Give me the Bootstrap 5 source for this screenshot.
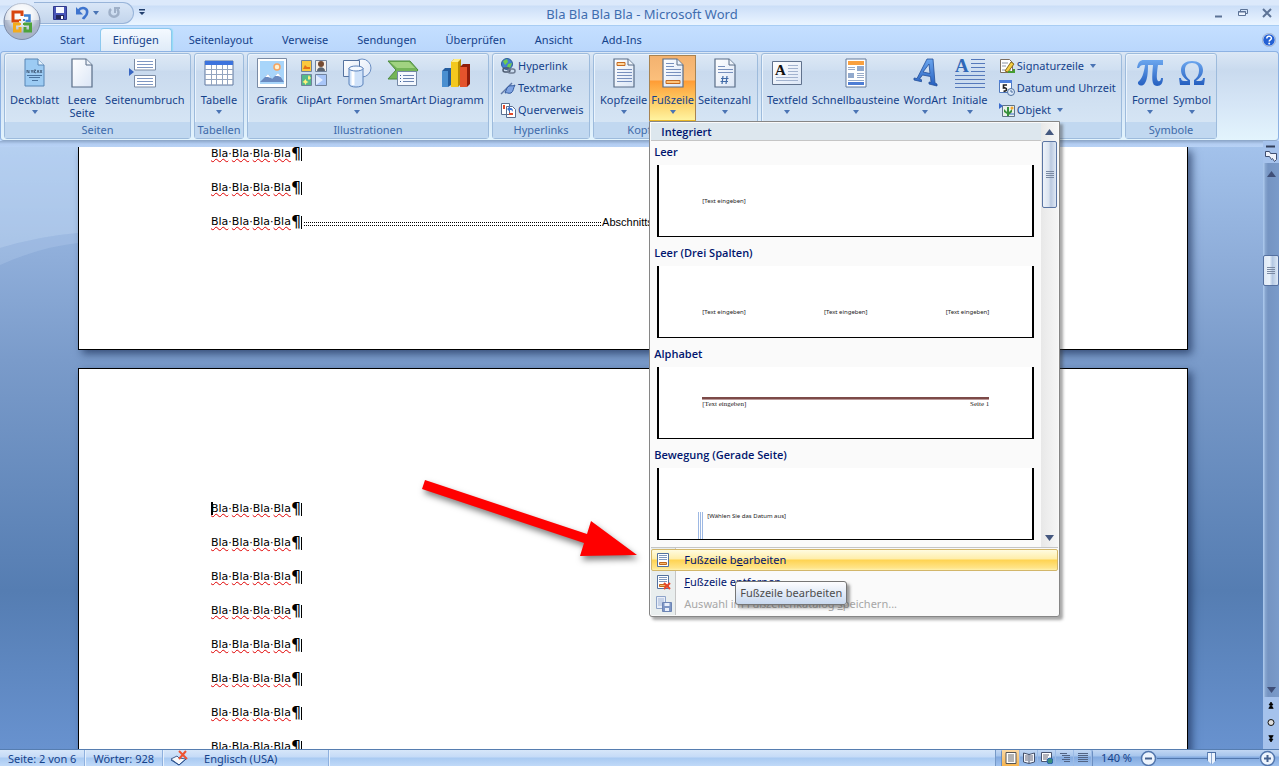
<!DOCTYPE html>
<html lang="de">
<head>
<meta charset="utf-8">
<meta name="viewport" content="width=device-width, initial-scale=1">
<title>Bla Bla Bla Bla - Microsoft Word</title>
<link href="https://cdn.jsdelivr.net/npm/bootstrap@5.3.0/dist/css/bootstrap.min.css" rel="stylesheet">
<style>
  :root { --ink: #15428b; --line: #9dbbdc; }
  body { font: 11px/14px "Noto Sans", sans-serif; color: var(--ink); background: #bfdbff; height: 100vh; }
  button { font: inherit; color: inherit; background: none; border: 0; padding: 0; }
  a { color: inherit; text-decoration: none; }
  svg { display: block; flex: none; }

  /* title bar */
  .titlebar { height: 26px; background: linear-gradient(#dce9fb 0 5px, #cbdef7 6px, #dceafc 16px, #e9f4ff 24px); border-bottom: 1px solid #a8cdf3; }
  .quickbar { margin-left: 34px; width: 100px; height: 22px; margin-top: 2px; padding-left: 19px; border: 1px solid #98b4d9; border-radius: 0 11px 11px 0; border-left: 0; background: linear-gradient(#d9e6f7, #c3d5ec); }
  .caption { font-size: 13px; line-height: 28px; color: #3f6daf; padding-right: 74px; white-space: nowrap; }
  .orb { left: 3px; top: 2px; z-index: 5; }
  .wincontrols { gap: 12px; padding-right: 6px; }

  /* tabs */
  .tabstrip { height: 25px; padding: 2px 3px 0 46px; gap: 1px; background: linear-gradient(#c4dfff, #bad7fc); }
  .tab { height: 23px; line-height: 22px; padding: 1px 14px; }
  .tab.active { background: linear-gradient(#f4f9ff, #dfebf8); border: 1px solid #8cc8ee; border-bottom: 0; border-radius: 4px 4px 0 0; padding: 0 12px; margin-right: 2px; box-shadow: 1px 0 1px #8fdcf5; }

  /* ribbon */
  .ribbon { height: 90px; padding: 1px 2px 1px 3px; gap: 3px; border: 1px solid #8db2e3; border-bottom-color: #8fa9cb; border-radius: 4px; background: linear-gradient(#dbe7f5, #c9daee 18px, #d5e5f6 50px, #e3f4fd); }
  .rgroup { border: 1px solid var(--line); border-radius: 3px; box-shadow: inset 1px 1px #eaf3fc; background: linear-gradient(#dde8f5, #cfdff1 16px, #c9daee 17px, #d9e8f6); height: 86px; flex: none; }
  .rgroup > .rbody { height: 68px; padding: 1px 3px 0; }
  .rgroup.g5 > .rbody { padding-left: 4px; }
  .rname { height: 16px; line-height: 16px; background: #c1d8f0; color: #3e6aaa; text-align: center; white-space: nowrap; overflow: hidden; }
  .big { display: flex; flex-direction: column; align-items: center; min-width: 42px; height: 66px; padding: 2px; white-space: nowrap; line-height: 13px; }
  .big > svg { margin-bottom: 4px; }
  .big .chev { margin: 4px 0 0; }
  .big.on { background: linear-gradient(#f3b26f, #fbbf7b 24px, #ff9c35 25px, #fdd36d 48px, #fff3a0); border: 1px solid #a88350; border-bottom-color: #e9b827; padding: 1px; }
  .mini { display: flex; align-items: center; gap: 2px; height: 22px; white-space: nowrap; }
  .g1 { width: 187px; } .g2 { width: 50px; } .g3 { width: 242px; } .g4 { width: 98px; }
  .g5 { width: 165px; } .g6 { width: 361px; } .g7 { width: 92px; }

  /* gallery menu */
  .gallery { left: 0; top: 100%; width: 411px; z-index: 10; background: #fafafa; border: 1px solid #868686; border-radius: 0 0 3px 3px; box-shadow: 3px 3px 3px rgba(60,60,60,.45); color: #00156e; padding: 1px; }
  .ghead { background: #dde7ee; height: 18px; padding-left: 10px; border-bottom: 1px solid #c5c5c5; font: 600 11px/18px "Open Sans", sans-serif; }
  .gtitle { display: block; font: 600 11px/14px "Open Sans", sans-serif; padding: 4px 0 0 3px; height: 24px; }
  .preview { height: 72px; margin: 0 7px 5px 6px; background: #fff; border: solid #000; border-width: 0 2px 1px; padding: 0 43px; font-size: 6px; line-height: 8px; color: #222; }
  .preview.three { padding-bottom: 21px; }
  .preview.dated { padding-left: 39px; }
  .preview.serif { font: 7px/8px "Liberation Serif", serif; }
  .ruleline { border: solid #7c4a48; border-width: 2px 0 1px; border-bottom-color: #b99; }
  .glist { padding-bottom: 2px; }
  .gscroll { width: 17px; background: linear-gradient(90deg, #e8e8e8, #f6f6f6); }
  .garrow { width: 15px; height: 18px; display: grid; place-items: center; }
  .gthumb { width: 15px; height: 67px; border: 1px solid #5b75a3; border-radius: 2px; background: linear-gradient(90deg, #eef3fa, #dbe4f0 45%, #b9c8e0 60%, #dfe8f4); place-items: center; }
  .gitem { display: flex; align-items: center; height: 22px; width: 100%; padding-left: 4px; gap: 12px; border: 1px solid transparent; text-align: left; }
  .gitem.hot { border-color: #d2b66a; border-radius: 2px; background: linear-gradient(#fffbe0, #ffeea9 9px, #ffd351 10px, #ffe58b 18px, #fff2b0); }
  .gitem:disabled { color: #a7a7a7; }
  .gfoot { border-top: 1px solid #c5c5c5; padding-top: 1px; background: linear-gradient(90deg, #e9eeee 24px, #c5c5c5 24px 25px, #fafafa 25px); }
  .hint { left: 85px; bottom: 11px; height: 24px; line-height: 22px; padding: 0 4px; border: 1px solid #767676; border-radius: 3px; background: linear-gradient(#fdfdff, #c9d9ef); color: #4c4c4c; box-shadow: 3px 3px 3px rgba(60,60,60,.5); white-space: nowrap; }

  /* document */
  .work { background: linear-gradient(#a4c3ec, #8eadd9 120px, #7a9bca 220px, #557db2 450px, #6892cf); }
  .glow { left: 0; top: 0; }
  .topline { height: 6px; background: linear-gradient(#93add0, #b3cdf2 3px, #b8d2f5); }
  .canvas { min-height: 0; padding: 0 75px 0 78px; gap: 18px; z-index: 1; }
  .sheet { border: 1px solid #000; background: #fff; box-shadow: 4px 4px 8px rgba(20,40,80,.65); padding-left: 132px; color: #000; flex: none; font: 11px/34px "DejaVu Sans", sans-serif; overflow: hidden; }
  .sheet.first { border-top: 0; height: 203px; }
  .sheet.first > p:first-child { margin-top: -10px; }
  .sheet.second { padding-top: 123px; height: 420px; }
  .sheet p { margin: 0; height: 34px; display: flex; align-items: center; white-space: nowrap; }
  .sheet u { text-decoration: underline wavy #e00000 1px; text-underline-offset: 1px; }
  .pil { font-size: 16px; line-height: 20px; }
  .cursor { width: 2px; height: 13px; background: #000; margin-right: -2px; }
  .pil::after { content: ""; display: inline-block; width: 1px; height: 13px; background: #000; vertical-align: -2px; }
  .dots { width: 298px; height: 4px; margin: 4px 0 0 2px; background: linear-gradient(#fff, #fff) 0 1px / 100% 2px no-repeat, repeating-linear-gradient(90deg, #000 0 1px, #fff 1px 2px); }
  .breaktext { font-family: "Liberation Sans", sans-serif; }
  .pointer { left: 415px; top: 334px; z-index: 2; filter: drop-shadow(2px 4px 3px rgba(0,0,0,.5)); }
  .vscroll { width: 16px; background: #a5c2ec; }
  .vtrack { background: linear-gradient(90deg, #a8c5ea 0 1px, #8aa8d1 2px, #7594c2 5px, #7a9bca); }
  .vthumb { height: 31px; border: 1px solid #5470a0; border-radius: 2px; margin-top: 78px; background: linear-gradient(90deg, #dfe9f5, #e8f1fb 40%, #b4c8e3 60%, #dce8f6); place-items: center; }

  /* status bar */
  .status { height: 18px; border-top: 1px solid #567db0; background: linear-gradient(#d7e6f9, #c5dbf7 7px, #a9caf2 8px, #c0d9f8); line-height: 18px; overflow: hidden; }
  .status > .cell { padding: 0 8px; border-right: 1px solid #8eb0de; box-shadow: 1px 0 #e5f0fd; height: 18px; }
  .status > .lang { width: 166px; gap: 15px; }
  .zoomside { background: linear-gradient(#c2d7f3, #a7c5ec 6px, #83aadf 7px, #9fc1ee); border-left: 1px solid #7699c7; padding: 0 3px 0 5px; }
  .views { border: 1px solid #6b8fc2; border-radius: 3px 3px 0 0; }
  .views button { width: 18px; height: 17px; display: grid; place-items: center; border-right: 1px solid #9cbbe6; }
  .views button.on { background: linear-gradient(#fbd9a4, #f5b24b); }
  .zoomer { appearance: none; width: 102px; height: 14px; background: linear-gradient(#5278ae, #5278ae) center / 100% 1px no-repeat; }
  .zoomer::-webkit-slider-thumb { appearance: none; width: 9px; height: 13px; background: linear-gradient(90deg, #4b6fa5 0 1px, #edf4fd 1px 4px, #8aa6cf 4px 5px, #edf4fd 5px 8px, #4b6fa5 8px); clip-path: polygon(0 0, 100% 0, 100% 68%, 50% 100%, 0 68%); border-top: 1px solid #4b6fa5; }
</style>
</head>
<body class="d-flex flex-column overflow-hidden m-0 position-relative">

<svg width="0" height="0" class="position-absolute" aria-hidden="true">
  <defs>
    <linearGradient id="blue" x2="0" y2="1"><stop stop-color="#6ba6ee"/><stop offset="1" stop-color="#255fc0"/></linearGradient>
    <linearGradient id="paper" x2="1" y2="1"><stop stop-color="#fff"/><stop offset="1" stop-color="#dbe6f6"/></linearGradient>
    <radialGradient id="orbfill" cx=".5" cy=".3"><stop stop-color="#fff"/><stop offset=".6" stop-color="#e3e8f0"/><stop offset="1" stop-color="#a9b4c8"/></radialGradient>
    <symbol id="chev" viewBox="0 0 6 4"><path d="M0 0h6L3 4z" fill="#4a74b4"/></symbol>
    <symbol id="page" viewBox="0 0 24 30"><path d="M2 1h14l6 6v22H2z" fill="url(#paper)" stroke="#596d87" stroke-width="1.2"/><path d="M16 1v6h6" fill="#eef3fa" stroke="#596d87"/></symbol>
    <symbol id="doc" viewBox="0 0 14 16"><path d="M1.500 1.500h11v13h-11z" fill="#fff" stroke="#52719e"/><path d="M3 3.500h8M3 5.500h8M3 7.500h8" stroke="#7d96bd"/><path d="M3.500 10.500h7v2h-7z" fill="#f7b96a" stroke="#c2671b"/></symbol>
  </defs>
</svg>

<button class="orb position-absolute" aria-label="Office">
  <svg width="38" height="38" viewBox="0 0 38 38"><circle cx="19" cy="19.500" r="18" fill="url(#orbfill)" stroke="#7c8ba8"/><path d="M2 18a17 17 0 0 1 34 0z" fill="#fff" opacity=".55"/>
  <g fill="none" stroke-width="3"><path d="M16 19h-6V10h9v4" stroke="#d8450f"/><path d="M21 13.500h5.500V19h-4" stroke="#3c7fd0" stroke-width="2.500"/><path d="M17 22h-5.500v7H17v-4" stroke="#f3ab1c"/><path d="M21 22h6.500v7H22v-4" stroke="#4ea33b"/></g>
  <g fill="#e66a1c"><path d="M16 17h2v2h-2z"/><path d="M20 17h2v2h-2z" fill="#3c7fd0"/><path d="M16 21h2v2h-2z" fill="#f3ab1c"/><path d="M20 21h2v2h-2z" fill="#4ea33b"/></g></svg>
</button>

<header class="titlebar d-flex flex-none">
  <div class="quickbar d-flex align-items-center">
    <button aria-label="Speichern"><svg width="14" height="14" viewBox="0 0 14 14"><path d="M.5.5h13v13H.5z" fill="#4855b8" stroke="#30398c"/><path d="M3 1h8v6H3z" fill="#f5f8ff"/><path d="M3 9h8v4H3z" fill="#23275c"/><path d="M8 10h2v3H8z" fill="#fff"/></svg></button>
    <button class="ms-2" aria-label="Rückgängig"><svg width="14" height="14" viewBox="0 0 14 14"><path d="M3 5c4-5 10-3 9 2 0 3-3 4-4 6" fill="none" stroke="#3e74ce" stroke-width="2.600"/><path d="M1 1v7.500h7z" fill="#3e74ce"/></svg></button>
    <svg class="ms-1" width="6" height="4"><use href="#chev"/></svg>
    <svg class="ms-2" width="14" height="14" viewBox="0 0 14 14"><path d="M4 3a4.500 4.500 0 1 0 6 0" fill="none" stroke="#9fb0c8" stroke-width="2.500"/><path d="M7 1h6v2H9v4H7z" fill="#9fb0c8"/></svg>
  </div>
  <svg class="ms-1 mt-2" width="8" height="10" viewBox="0 0 8 10"><path d="M1 1h6v1.500H1zM1 4h6L4 7z" fill="#23406e"/></svg>
  <div class="caption flex-grow-1 text-center">Bla Bla Bla Bla - Microsoft Word</div>
  <div class="wincontrols d-flex align-items-center">
    <button aria-label="Minimieren"><svg width="13" height="10" viewBox="0 0 13 10"><path d="M3 8.500h7" stroke="#5c7396" stroke-width="2"/></svg></button>
    <button aria-label="Wiederherstellen"><svg width="12" height="10" viewBox="0 0 12 10"><path d="M3.500 3V1.500h7v4H9" fill="none" stroke="#5c7396"/><path d="M1.500 3.500h7v4h-7z" fill="#eef5ff" stroke="#5c7396"/><path d="M1 4h8" stroke="#5c7396"/></svg></button>
    <button aria-label="Schließen"><svg width="12" height="10" viewBox="0 0 12 10"><path d="M2 1l8 8M10 1l-8 8" stroke="#5c7396" stroke-width="2"/></svg></button>
  </div>
</header>

<nav class="tabstrip d-flex flex-none">
  <a class="tab" href="#">Start</a><a class="tab active" href="#">Einfügen</a><a class="tab" href="#">Seitenlayout</a><a class="tab" href="#">Verweise</a><a class="tab" href="#">Sendungen</a><a class="tab" href="#">Überprüfen</a><a class="tab" href="#">Ansicht</a><a class="tab" href="#">Add-Ins</a>
  <button class="ms-auto" aria-label="Hilfe"><svg width="14" height="14" viewBox="0 0 14 14"><circle cx="7" cy="7" r="6.300" fill="#2360d4" stroke="#f2f7ff"/><circle cx="7" cy="7" r="6.700" fill="none" stroke="#8197b9" stroke-width=".6"/><path d="M4.800 5.500c0-3 4.600-2.800 4.600-.3C9.400 7 7.200 6.800 7.200 8.500" fill="none" stroke="#fff" stroke-width="1.500"/><circle cx="7.200" cy="10.500" r="1" fill="#fff"/></svg></button>
</nav>

<div class="ribbon d-flex flex-none">
  <section class="rgroup g1">
    <div class="rbody d-flex">
      <button class="big"><svg width="32" height="32" viewBox="0 0 32 32"><path d="M6 2h13l6 6v21H6z" fill="#9ccbf3" stroke="#5986b5"/><path d="M19 2v6h6" fill="#e5f2fd" stroke="#5986b5"/><path d="M8 16v-3l2 3v-3M12 13l1 1.500 1-1.500M13 14v2M15 16v-3h2l-2 2 2 1M18 16l1-3 1 3M21 13l2 3M23 13l-2 3" fill="none" stroke="#3a526e" stroke-width=".8"/><path d="M8 18.500h15M10 20.500h11M13 23.500h6" stroke="#4a739f"/></svg>Deckblatt<svg class="chev" width="6" height="4"><use href="#chev"/></svg></button>
      <button class="big"><svg width="32" height="32" viewBox="0 0 32 32"><use href="#page" x="4" y="1" width="24" height="30"/></svg>Leere<br>Seite</button>
      <button class="big"><svg width="32" height="32" viewBox="3 0 32 32"><path d="M8.500 2v11h21V2M8.500 30V18.500h21V30z" fill="#fff" stroke="#7a8ba5"/><path d="M11 4.500h16M11 7.500h16M11 10.500h16M11 21.500h16M11 24.500h16M11 27.500h16" stroke="#7f97c2"/><path d="M3 11l5 4-5 4z" fill="#3967c2"/></svg>Seitenumbruch</button>
    </div><div class="rname">Seiten</div>
  </section>
  <section class="rgroup g2">
    <div class="rbody d-flex">
      <button class="big"><svg width="32" height="32" viewBox="0 0 32 32"><path d="M2 4h28v24H2z" fill="#fff" stroke="#60789f"/><path d="M2 4h28v4H2z" fill="#3c73dd"/><path d="M2 12.500h28M2 17.500h28M2 22.500h28M8.500 8v20M13.500 8v20M19.500 8v20M24.500 8v20" stroke="#93a5c0"/></svg>Tabelle<svg class="chev" width="6" height="4"><use href="#chev"/></svg></button>
    </div><div class="rname">Tabellen</div>
  </section>
  <section class="rgroup g3">
    <div class="rbody d-flex">
      <button class="big"><svg width="32" height="32" viewBox="0 0 32 32"><path d="M1.500 1.500h29v29h-29z" fill="#fff" stroke="#7a8ba5"/><path d="M4 4h24v23H4z" fill="#a8d5fa"/><circle cx="21" cy="10" r="3" fill="#fff1d0" stroke="#f7a460" stroke-width="1.500"/><path d="M4 25l8-8 4 5 6-6 6 9z" fill="#6a8ac0"/><path d="M9 20l3-3 3 4-3-1zM19 19l3-3 3 4-3-1z" fill="#fff"/></svg>Grafik</button>
      <button class="big"><svg width="32" height="32" viewBox="0 0 32 32" stroke="#70829c"><path d="M3.500 3.500h10v11h-10z" fill="#fbc93e"/><path d="M5 12l2-4 2 2h3v2z" fill="#e47116" stroke="none"/><path d="M17.500 3.500h11v11h-11z" fill="#f6efe8"/><circle cx="23" cy="7" r="3" fill="#754a31" stroke="none"/><path d="M19 14c0-5 8-5 8 0z" fill="#5b6572" stroke="none"/><path d="M3.500 17.500h10v11h-10z" fill="#55b98a"/><path d="M6 24l1.500-2 1 2 2 1-2 1-1 2-1-2-2-1zM10 20l1-2 1 2 1 1-1 1-1 1-1-1z" fill="#fff37a" stroke="none"/><path d="M17.500 17.500h11v11h-11z" fill="#a9c6f8"/><path d="M18 18l7 5-7 5z" fill="#e3edff" stroke="none"/></svg>ClipArt</button>
      <button class="big"><svg width="32" height="32" viewBox="0 0 32 32"><circle cx="21" cy="11" r="9" fill="url(#paper)" stroke="#6c8fc3"/><path d="M2.500 3.500h16v16h-16z" fill="url(#paper)" stroke="#54729f"/><path d="M8 11v16c0 4 14 4 14 0V11z" fill="#cfe2fa" stroke="#5b82bb"/><path d="M12 13v15" stroke="#fff" stroke-width="3"/><ellipse cx="15" cy="11.500" rx="7" ry="2.500" fill="#f4f9ff" stroke="#5b82bb"/></svg>Formen<svg class="chev" width="6" height="4"><use href="#chev"/></svg></button>
      <button class="big"><svg width="32" height="32" viewBox="0 0 32 32"><path d="M1 4h22l8 9-8 9H1l8-9z" fill="#74b558" stroke="#4c8a3e"/><path d="M3 5h19l6 6H10z" fill="#a1d381"/><path d="M10.500 14.500h19v14h-19z" fill="#f4f8fe" stroke="#7489a6"/><path d="M16 18.500h11M16 21.500h11M16 24.500h11" stroke="#6b84b0"/><path d="M13 18.500h1M13 21.500h1M13 24.500h1" stroke="#355c9b"/></svg>SmartArt</button>
      <button class="big"><svg width="32" height="32" viewBox="0 0 32 32"><path d="M2 14l3-3h6v17l-3 2H2z" fill="#245c9e"/><path d="M2 14h6v16H2z" fill="#4a8fd0"/><path d="M11 5l3-3h7v25l-3 3h-7z" fill="#b98b00"/><path d="M11 5h7v25h-7z" fill="#f3c81e"/><path d="M20 10l3-3h7v20l-3 3h-7z" fill="#8f1c0a"/><path d="M20 10h7v20h-7z" fill="#e4532c"/><path d="M11 5l3-3h7l-3 3z" fill="#ffec80"/></svg>Diagramm</button>
    </div><div class="rname">Illustrationen</div>
  </section>
  <section class="rgroup g4">
    <div class="rbody">
      <button class="mini ps-1"><svg width="16" height="16" viewBox="0 0 16 16"><circle cx="7" cy="6" r="5.500" fill="#4381d1" stroke="#2e5d97"/><path d="M3 3l4-2 1 3-3 3zM8 6l4-1-2 5-3-1z" fill="#6fcd4d"/><rect x="3" y="10" width="7" height="4" rx="2" fill="none" stroke="#4b5a70" stroke-width="1.500"/><rect x="8" y="11" width="7" height="4" rx="2" fill="none" stroke="#6d7c92" stroke-width="1.500"/></svg>Hyperlink</button>
      <button class="mini ps-1"><svg width="16" height="16" viewBox="0 0 16 16"><path d="M1 14L12 3" stroke="#6179a8" stroke-width="1.500"/><path d="M7 8c3-4 5-1 8-3-2 3-1 6-4 8-3 1-4-1-6 0z" fill="#7fa3e2" stroke="#345b9e"/></svg>Textmarke</button>
      <button class="mini ps-1"><svg width="16" height="16" viewBox="0 0 16 16"><path d="M1.500 1.500h8v11h-8zM6.500 4.500h6l3 3v8h-9z" fill="#fff" stroke="#5a6f90"/><path d="M3 3h2v4H3zM9 11h4v2H9z" fill="#e34a2b"/><path d="M7 7l3-3v2c3 0 3 2 3 4-1-2-2-2-3-2v2z" fill="#3c73cf"/></svg>Querverweis</button>
    </div><div class="rname">Hyperlinks</div>
  </section>
  <section class="rgroup g5">
    <div class="rbody d-flex">
      <button class="big"><svg width="32" height="32" viewBox="0 0 32 32"><use href="#page" x="4" y="1" width="24" height="30"/><path d="M9 5.500h8v3H9z" fill="#ffd59a" stroke="#c56a21"/><path d="M9 12.500h15M9 15.500h15M9 18.500h15M9 21.500h15M9 24.500h15" stroke="#7890bd"/></svg>Kopfzeile<svg class="chev" width="6" height="4"><use href="#chev"/></svg></button>
      <div class="position-relative align-self-start">
        <button class="big on" aria-expanded="true"><svg width="32" height="32" viewBox="0 0 32 32"><use href="#page" x="4" y="1" width="24" height="30"/><path d="M9 6.500h8M9 9.500h8M9 12.500h15M9 15.500h15M9 18.500h15" stroke="#7890bd"/><path d="M9 23.500h14v3H9z" fill="#ffc47a" stroke="#c56a21"/></svg>Fußzeile<svg class="chev" width="6" height="4"><use href="#chev"/></svg></button>
        <div class="gallery position-absolute">
          <div class="d-flex">
            <div class="glist flex-grow-1">
              <div class="ghead">Integriert</div>
              <a href="#" class="d-block"><span class="gtitle">Leer</span><div class="preview d-flex align-items-center">[Text eingeben]</div></a>
              <a href="#" class="d-block"><span class="gtitle">Leer (Drei Spalten)</span><div class="preview three d-flex align-items-end justify-content-between"><span>[Text eingeben]</span><span>[Text eingeben]</span><span>[Text eingeben]</span></div></a>
              <a href="#" class="d-block"><span class="gtitle">Alphabet</span><div class="preview serif d-flex flex-column justify-content-center"><div class="ruleline"></div><div class="d-flex justify-content-between"><span>[Text eingeben]</span><span>Seite 1</span></div></div></a>
              <a href="#" class="d-block"><span class="gtitle">Bewegung (Gerade Seite)</span><div class="preview dated d-flex align-items-end"><div class="d-flex gap-1"><svg width="5" height="27"><path d="M.5 0v27M2.500 0v27M4.500 0v27" stroke="#9db8e3"/></svg><span>[Wählen Sie das Datum aus]</span></div></div></a>
            </div>
            <div class="gscroll d-flex flex-column align-items-center">
              <button aria-label="Nach oben" class="garrow"><svg width="9" height="6"><path d="M0 6h9L4.500 0z" fill="#45587f"/></svg></button>
              <div class="gthumb d-grid"><svg width="8" height="8"><path d="M0 .5h8M0 2.500h8M0 4.500h8M0 6.500h8" stroke="#7b8aa3"/></svg></div>
              <button aria-label="Nach unten" class="garrow mt-auto"><svg width="9" height="6"><path d="M0 0h9L4.500 6z" fill="#45587f"/></svg></button>
            </div>
          </div>
          <div class="gfoot">
            <button class="gitem hot"><svg width="16" height="16"><use href="#doc" width="14" height="16"/></svg><span>Fußzeile b<u>e</u>arbeiten</span></button>
            <button class="gitem"><svg width="16" height="16"><use href="#doc" width="14" height="16"/><path d="M8 9l6 6M14 9l-6 6" stroke="#e8472a" stroke-width="2"/></svg><span><u>F</u>ußzeile entfernen</span></button>
            <button class="gitem" disabled><svg width="16" height="16" viewBox="0 0 16 16"><path d="M.5.5h9v12h-9z" fill="#e8eef8" stroke="#8ea4c9"/><path d="M2 3h6M2 5h6M2 7h4M2 9h4" stroke="#a3b6d6"/><path d="M6.500 6.500h9v9h-9z" fill="#7e96c4" stroke="#6c84b4"/><path d="M8.500 7h5v3h-5zM9 12h4v3H9z" fill="#e9effa"/></svg><span>Auswahl im Fußzeilenkatalog <u>s</u>peichern...</span></button>
          </div>
          <div class="hint position-absolute" role="tooltip">Fußzeile bearbeiten</div>
        </div>
      </div>
      <button class="big"><svg width="32" height="32" viewBox="0 0 32 32"><use href="#page" x="4" y="1" width="24" height="30"/><path d="M9 9.500h7M9 12.500h15M9 15.500h15" stroke="#7890bd"/><path d="M14 19l-1 8M18 19l-1 8M12 21.500h7.500M11.500 24.500H19" stroke="#426ba7" stroke-width="1.200"/></svg>Seitenzahl<svg class="chev" width="6" height="4"><use href="#chev"/></svg></button>
    </div><div class="rname">Kopf- und Fußzeile</div>
  </section>
  <section class="rgroup g6">
    <div class="rbody d-flex">
      <button class="big"><svg width="32" height="32" viewBox="0 0 32 32"><path d="M1.500 4.500h29v23h-29z" fill="url(#paper)" stroke="#60728d"/><path d="M17 8.500h10M17 11.500h10M17 14.500h10M17 17.500h10M5 20.500h22M5 23.500h22" stroke="#a2b3cf"/><text x="4" y="18" font-family="Liberation Serif, serif" font-size="15" font-weight="bold" fill="#111">A</text></svg>Textfeld<svg class="chev" width="6" height="4"><use href="#chev"/></svg></button>
      <button class="big"><svg width="32" height="32" viewBox="0 0 32 32"><path d="M6 2h20v28H6z" fill="#fff" stroke="#60789a"/><path d="M8 4h16v4H8z" fill="#f9a03f"/><path d="M8 10.500h7M8 12.500h7" stroke="#98abc8"/><path d="M17 9h7v5h-7zM8 16h6v5H8z" fill="#91a9cd"/><path d="M17 16.500h7M17 18.500h7M17 20.500h7M8 23.500h16" stroke="#98abc8"/><path d="M8 25h16v3H8z" fill="#4d7dd4"/></svg>Schnellbausteine<svg class="chev" width="6" height="4"><use href="#chev"/></svg></button>
      <button class="big"><svg width="32" height="32" viewBox="2 0 32 32"><path d="M20 2h6l2 24 2 1v2l-8-2v-2l2 .5-.5-6-8-1.500-3 4 2 .7v2L7 23v-2l3 .5zM22 7l-6 8 7 1.500z" fill="url(#blue)" stroke="#234f99" stroke-width=".8" fill-rule="evenodd"/></svg>WordArt<svg class="chev" width="6" height="4"><use href="#chev"/></svg></button>
      <button class="big"><svg width="32" height="32" viewBox="0 0 32 32"><text x="1" y="15" font-family="Liberation Serif, serif" font-size="19" font-weight="bold" fill="#2f68b8">A</text><path d="M17 2.500h14M17 6.500h14M17 10.500h14M17 14.500h14M1 18.500h30M1 22.500h30M1 26.500h30M1 30.500h30" stroke="#5579bb"/></svg>Initiale<svg class="chev" width="6" height="4"><use href="#chev"/></svg></button>
      <div class="ms-2">
        <button class="mini"><svg width="16" height="16" viewBox="0 0 16 16"><path d="M1.500 1.500h9l3 3v10h-12z" fill="#fff" stroke="#7c6e60"/><path d="M3 5h6M3 8h4M3 12h9" stroke="#8b94a4"/><path d="M6 13l6-9 3 2-6 8z" fill="#f5cf45" stroke="#8b6c1b"/><path d="M9 14h6v-3" fill="none" stroke="#469d32" stroke-width="2"/></svg>Signaturzeile<svg class="ms-1" width="6" height="4"><use href="#chev"/></svg></button>
        <button class="mini"><svg width="16" height="16" viewBox="0 0 16 16"><path d="M.5.5h12v12H.5z" fill="#fff" stroke="#5079bd"/><path d="M0 0h13v3H0z" fill="#4e80dc"/><path d="M8 5H4.500v3c4-1 4 4 0 3" fill="none" stroke="#222" stroke-width="1.600"/><circle cx="12" cy="12" r="3.500" fill="#dce9fa" stroke="#4f719f"/><path d="M12 10v2h2" fill="none" stroke="#4f719f"/></svg>Datum und Uhrzeit</button>
        <button class="mini"><svg width="16" height="16" viewBox="0 0 16 16"><path d="M3.500 3.500h12v11h-12z" fill="#e9f0e9" stroke="#5f7388"/><path d="M0 1l4 3-4 3z" fill="#3769cc"/><path d="M5 7l3 3V5h2v5l3-3v3l-3 3v1H8v-2L5 10z" fill="#38913b"/><circle cx="13" cy="6" r="1.500" fill="#f4a42c"/><path d="M11 12h4" stroke="#3769cc"/></svg>Objekt<svg class="ms-1" width="6" height="4"><use href="#chev"/></svg></button>
      </div>
    </div><div class="rname">Text</div>
  </section>
  <section class="rgroup g7">
    <div class="rbody d-flex">
      <button class="big"><svg width="32" height="32" viewBox="0 0 32 32"><path d="M3 11C4 5 6 3 10 3h19v5h-5c-1 7-2 14 0 16 2 1 3-1 3-3h2c0 5-2 8-6 8-6 0-5-9-4-21h-5c0 9-1 15-3 18-2 4-8 3-7-1 4-3 6-9 7-17H9c-2 0-3 1-4 3z" fill="url(#blue)"/></svg>Formel<svg class="chev" width="6" height="4"><use href="#chev"/></svg></button>
      <button class="big"><svg width="32" height="32" viewBox="0 0 32 32"><path d="M3 21h2c0 2 1 3 3 3h4c-4-3-7-6-7-11C5 7 10 4 16 4s11 3 11 9c0 5-3 8-7 11h4c2 0 3-1 3-3h2l-1 7H18v-5c3-2 5-5 5-10 0-4-2-7-7-7s-7 3-7 7c0 5 2 8 5 10v5H4z" fill="url(#blue)"/></svg>Symbol<svg class="chev" width="6" height="4"><use href="#chev"/></svg></button>
    </div><div class="rname">Symbole</div>
  </section>
</div>

<main class="work flex-grow-1 d-flex position-relative overflow-hidden">
  <svg class="glow position-absolute" width="78" height="130" viewBox="0 0 78 130"><path d="M0 0h78v92Q40 95 0 107z" fill="#cfe3fa" opacity=".4"/><path d="M0 107Q40 95 78 92v10Q40 106 0 124z" fill="#cfe3fa" opacity=".2"/></svg>
  <div class="flex-grow-1 d-flex flex-column overflow-hidden position-relative">
    <div class="topline flex-none"></div>
    <div class="canvas flex-grow-1 d-flex flex-column overflow-hidden">
      <article class="sheet first">
        <p><u>Bla</u>·<u>Bla</u>·<u>Bla</u>·<u>Bla</u><span class="pil">¶</span></p>
        <p><u>Bla</u>·<u>Bla</u>·<u>Bla</u>·<u>Bla</u><span class="pil">¶</span></p>
        <p><u>Bla</u>·<u>Bla</u>·<u>Bla</u>·<u>Bla</u><span class="pil">¶</span><span class="dots"></span><span class="breaktext">Abschnittswechsel (Nächste Seite)</span></p>
      </article>
      <article class="sheet second">
        <p><span class="cursor"></span><u>Bla</u>·<u>Bla</u>·<u>Bla</u>·<u>Bla</u><span class="pil">¶</span></p>
        <p><u>Bla</u>·<u>Bla</u>·<u>Bla</u>·<u>Bla</u><span class="pil">¶</span></p>
        <p><u>Bla</u>·<u>Bla</u>·<u>Bla</u>·<u>Bla</u><span class="pil">¶</span></p>
        <p><u>Bla</u>·<u>Bla</u>·<u>Bla</u>·<u>Bla</u><span class="pil">¶</span></p>
        <p><u>Bla</u>·<u>Bla</u>·<u>Bla</u>·<u>Bla</u><span class="pil">¶</span></p>
        <p><u>Bla</u>·<u>Bla</u>·<u>Bla</u>·<u>Bla</u><span class="pil">¶</span></p>
        <p><u>Bla</u>·<u>Bla</u>·<u>Bla</u>·<u>Bla</u><span class="pil">¶</span></p>
        <p><u>Bla</u>·<u>Bla</u>·<u>Bla</u>·<u>Bla</u><span class="pil">¶</span></p>
      </article>
    </div>
    <svg class="pointer position-absolute" width="235" height="105" viewBox="0 0 235 105"><path d="M10 5L172 59l4-13 46 34-57 1 4-13L7 14z" fill="#f00"/></svg>
  </div>
  <div class="vscroll d-flex flex-column">
    <svg class="mt-1 mx-auto" width="12" height="18" viewBox="0 0 12 18"><path d="M1 1.500h9" stroke="#33405c" stroke-width="2"/><path d="M.5 6.500h4l1 2h6v6l-2 2-2-3-1 1-2-3h-4z" fill="#eef2fb" stroke="#3f4e70"/></svg>
    <div class="vtrack flex-grow-1 d-flex flex-column">
      <button class="mx-auto mt-2" aria-label="Nach oben"><svg width="9" height="6"><path d="M0 6h9L4.500 0z" fill="#3f4f78"/></svg></button>
      <div class="vthumb d-grid"><svg width="8" height="8"><path d="M0 .5h8M0 2.500h8M0 4.500h8M0 6.500h8" stroke="#7b8aa3"/></svg></div>
      <button class="mx-auto mt-auto mb-1" aria-label="Nach unten"><svg width="9" height="6"><path d="M0 0h9L4.500 6z" fill="#3f4f78"/></svg></button>
    </div>
    <svg class="mx-auto" width="8" height="52" viewBox="0 0 8 52"><path d="M4 5l2 3H2zM4 8l2 3H2zM1.500 11.500h5M4 45l2-3H2zM4 42l2-3H2zM1.500 38.500h5" fill="#000" stroke="#000" stroke-width=".7"/><circle cx="4" cy="25.500" r="3" fill="#ddd" stroke="#111"/></svg>
  </div>
</main>

<footer class="status d-flex flex-none">
  <span class="cell">Seite: 2 von 6</span>
  <span class="cell">Wörter: 928</span>
  <span class="cell lang d-flex"><svg width="18" height="16" viewBox="0 0 18 16"><path d="M0 9l6-3 2 2 7 1-7 6z" fill="#f6f8fc" stroke="#46608f"/><path d="M0 10l8 5 7-6" fill="none" stroke="#27508f"/><path d="M8 1l8 8M15 1L8 9" stroke="#ee5331" stroke-width="2"/></svg>Englisch (USA)</span>
  <div class="zoomside d-flex align-items-center ms-auto">
    <div class="views d-flex">
      <button class="on" aria-label="Seitenlayout"><svg width="12" height="12"><path d="M1 .5h10v11H1z" fill="#fff" stroke="#555"/><path d="M3 3h6M3 5h6M3 7h6M3 9h6" stroke="#666"/></svg></button>
      <button aria-label="Lesemodus"><svg width="12" height="12"><path d="M.5 1L6 2.500 11.500 1v9L6 11.500.5 10zM6 2v9" fill="#f4f7fd" stroke="#444f68"/><path d="M2 4h3M2 6h3M2 8h3M7 4h3M7 6h3M7 8h3" stroke="#667"/></svg></button>
      <button aria-label="Weblayout"><svg width="12" height="12"><path d="M.5.5h10v9H.5z" fill="#fff" stroke="#4a5570"/><path d="M2 3h6M2 5h5M2 7h4" stroke="#667"/><circle cx="9" cy="9" r="3" fill="#3b8f7c" stroke="#285fae"/></svg></button>
      <button aria-label="Gliederung"><svg width="12" height="12"><path d="M1 1.500h7M3 3.500h8M5 5.500h6M3 7.500h8M5 9.500h6" stroke="#526484"/></svg></button>
      <button aria-label="Entwurf"><svg width="12" height="12"><path d="M1 1.500h10M1 3.500h10M1 5.500h10M1 7.500h10M1 9.500h10" stroke="#526484"/></svg></button>
    </div>
    <label for="zoom" class="px-2">140 %</label>
    <button aria-label="Verkleinern"><svg width="17" height="17" viewBox="0 0 17 17"><circle cx="8.500" cy="8.500" r="7" fill="#edf4fd" stroke="#5276ac" stroke-width="1.500"/><path d="M5 8.500h7" stroke="#46628f" stroke-width="2"/></svg></button>
    <input id="zoom" class="zoomer m-0" type="range" min="0" max="100" value="54">
    <button aria-label="Vergrößern"><svg width="17" height="17" viewBox="0 0 17 17"><circle cx="8.500" cy="8.500" r="7" fill="#edf4fd" stroke="#5276ac" stroke-width="1.500"/><path d="M5 8.500h7M8.500 5v7" stroke="#46628f" stroke-width="2"/></svg></button>
  </div>
</footer>

<script src="https://cdn.jsdelivr.net/npm/bootstrap@5.3.0/dist/js/bootstrap.bundle.min.js"></script>
</body>
</html>
